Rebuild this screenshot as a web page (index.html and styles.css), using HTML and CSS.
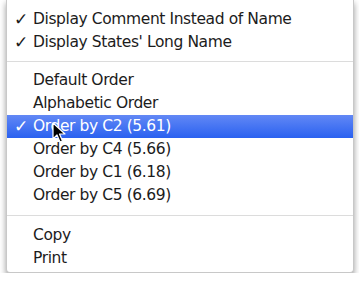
FILE: index.html
```html
<!DOCTYPE html>
<html>
<head>
  <title>Context Menu</title>
  <link rel="stylesheet" href="styles.css">
</head>
<body>
  <div class="menu">
    <div class="item checked">Display Comment Instead of Name</div>
    <div class="item checked">Display States' Long Name</div>
    <div class="sep"></div>
    <div class="item">Default Order</div>
    <div class="item">Alphabetic Order</div>
    <div class="item checked selected">Order by C2 (5.61)
      <svg class="cursor" width="14" height="22" viewBox="0 0 14 22">
        <path d="M1 1 L1 17 L5 13 L8 20 L10.5 19 L7.5 12 L13 12 Z" fill="#000" stroke="#fff" stroke-width="1.2" stroke-linejoin="round"/>
      </svg>
    </div>
    <div class="item">Order by C4 (5.66)</div>
    <div class="item">Order by C1 (6.18)</div>
    <div class="item">Order by C5 (6.69)</div>
    <div class="sep sep-low"></div>
    <div class="item">Copy</div>
    <div class="item">Print</div>
  </div>
</body>
</html>
```

FILE: styles.css
```css
body {
  margin: 0;
  background-color: #ffffff;
  font-family: "DejaVu Sans", Verdana, sans-serif;
}

.menu {
  width: 346px;
  margin-left: 6px;
  margin-top: -1px;
  padding: 8px 0 2px 0;
  background-color: #ffffff;
  border: 1px solid #c8c8c8;
  border-top-color: #bdbdbd;
  border-radius: 0 0 4px 4px;
  box-shadow: 0 4px 6px rgba(0, 0, 0, 0.4);
}

.item {
  position: relative;
  height: 23px;
  line-height: 23px;
  padding-left: 26px;
  font-size: 15.5px;
  letter-spacing: -0.4px;
  color: #1c1c1c;
  white-space: nowrap;
}

.item.checked::before {
  content: "\2713";
  position: absolute;
  left: 7px;
  font-size: 17px;
}

.item.selected {
  color: #ffffff;
  background: linear-gradient(#6288f5, #2a61f0);
}

.sep {
  height: 1px;
  margin: 7px 0 7px 0;
  background-color: #dcdcdc;
}

.sep-low {
  margin: 8px 0 8px 0;
}

.cursor {
  position: absolute;
  left: 45px;
  top: 7px;
}
```
